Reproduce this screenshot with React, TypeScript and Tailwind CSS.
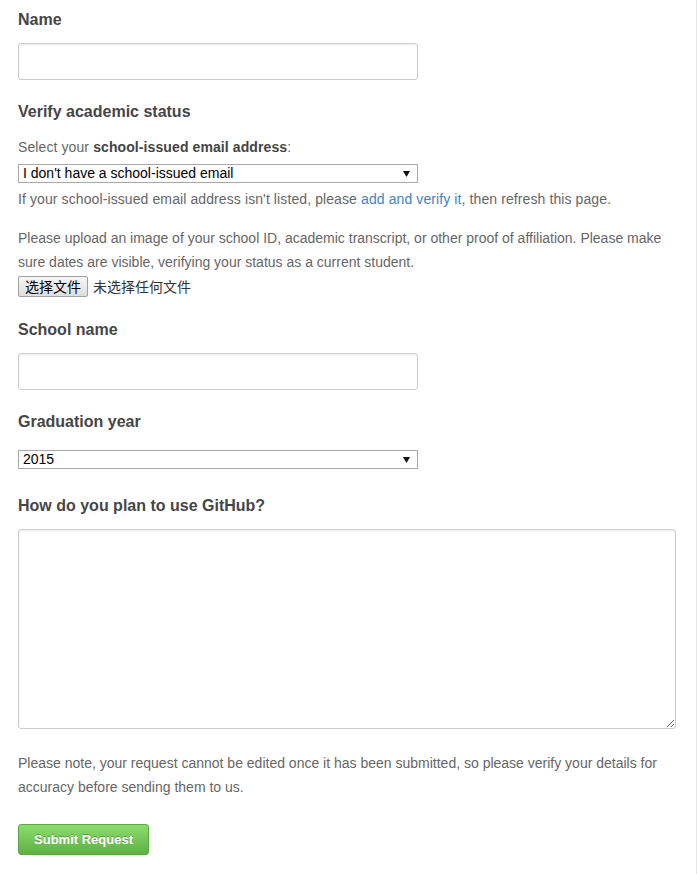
const Label = ({ children, className = "" }: { children: React.ReactNode; className?: string }) => (
  <h3 className={`pt-[1px] text-[16px] leading-[22px] font-bold text-[#464646] ${className}`}>{children}</h3>
);

const TextInput = ({ className = "" }: { className?: string }) => (
  <input
    type="text"
    className={`block w-[400px] h-[37px] rounded-[3px] border border-[#ccc] bg-white px-2 shadow-[inset_0_1px_2px_rgba(0,0,0,0.075)] outline-none ${className}`}
  />
);

const Select = ({ value, className = "" }: { value: string; className?: string }) => (
  <div className={`relative w-[400px] h-[19px] ${className}`}>
    <select
      defaultValue={value}
      className="block w-full h-full appearance-none rounded-none border border-[#a9a9a9] bg-white pl-[4px] text-[14px] leading-[17px] text-black font-['Liberation_Sans',Arial,sans-serif] outline-none"
    >
      <option>{value}</option>
    </select>
    <svg className="pointer-events-none absolute right-[8px] top-[7px]" width="7" height="6" viewBox="0 0 7 6">
      <path d="M0 0h7L3.5 6z" fill="#111" />
    </svg>
  </div>
);

export default function App() {
  return (
    <div className="w-[697px] min-h-[874px] border-r border-[#e5e5e5] bg-white pl-[18px] pt-[8px] font-['Liberation_Sans',Arial,sans-serif]">
      <form className="w-[660px]" onSubmit={(e) => e.preventDefault()}>
        <Label>Name</Label>
        <TextInput className="mt-[12px]" />

        <Label className="mt-[20px]">Verify academic status</Label>
        <p className="mt-[14px] text-[14px] leading-[20px] tracking-[0.1px] text-[#666]">
          Select your <strong className="text-[#444]">school-issued email address</strong>:
        </p>
        <Select value="I don't have a school-issued email" className="mt-[7px]" />
        <p className="mt-[6px] text-[14px] leading-[20px] tracking-[0.1px] text-[#666]">
          If your school-issued email address isn't listed, please{" "}
          <a href="#" className="text-[#4183c4]">add and verify it</a>, then refresh this page.
        </p>
        <p className="mt-[17px] text-[14px] leading-[24px] text-[#666]">
          Please upload an image of your school ID, academic transcript, or other proof of affiliation. Please make
          sure dates are visible, verifying your status as a current student.
        </p>
        <div className="mt-[2px] flex items-center gap-[5px] font-['Noto_Sans_CJK_SC',sans-serif] text-[14px]">
          <button
            type="button"
            className="h-[21px] px-[6px] rounded-[2px] border border-[#a0a0a0] bg-gradient-to-b from-[#f6f6f6] to-[#dedede] leading-[19px] text-black"
          >
            选择文件
          </button>
          <span className="text-[#333]">未选择任何文件</span>
        </div>

        <Label className="mt-[21px]">School name</Label>
        <TextInput className="mt-[12px]" />

        <Label className="mt-[20px]">Graduation year</Label>
        <Select value="2015" className="mt-[17px]" />

        <Label className="mt-[25px]">How do you plan to use GitHub?</Label>
        <textarea className="mt-[12px] block w-[658px] h-[200px] rounded-[3px] border border-[#ccc] bg-white p-2 shadow-[inset_0_1px_2px_rgba(0,0,0,0.075)] outline-none" />

        <p className="mt-[22px] text-[14px] leading-[24px] text-[#666]">
          Please note, your request cannot be edited once it has been submitted, so please verify your details for
          accuracy before sending them to us.
        </p>

        <button
          type="submit"
          className="mt-[25px] h-[31px] w-[131px] rounded-[3px] border border-[#5ca941] bg-gradient-to-b from-[#8add6d] to-[#60b044] text-[13px] font-bold text-white [text-shadow:0_-1px_0_rgba(0,0,0,0.25)]"
        >
          Submit Request
        </button>
      </form>
    </div>
  );
}
